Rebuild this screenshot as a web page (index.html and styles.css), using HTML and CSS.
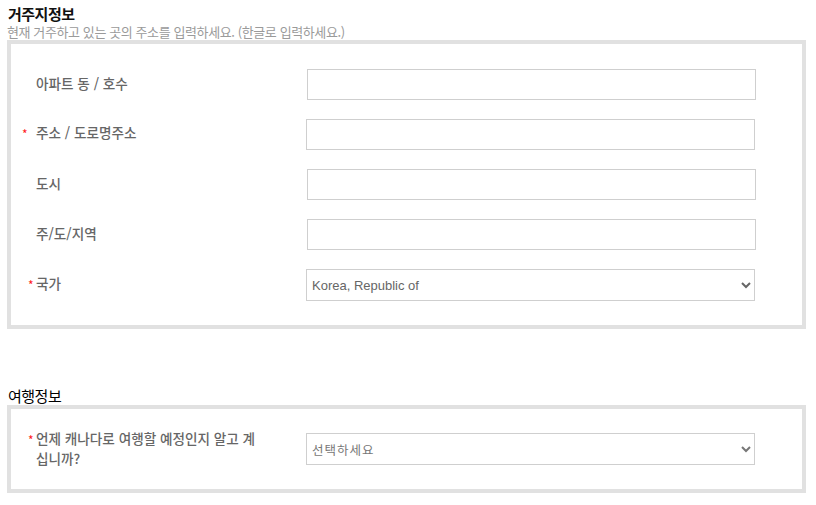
FILE: index.html
```html
<!DOCTYPE html>
<html lang="ko">
<head>
<meta charset="utf-8">
<title>거주지정보</title>
<link rel="stylesheet" href="styles.css">
</head>
<body>
<div class="page">
  <section class="section">
    <h2 class="sec-title">거주지정보</h2>
    <p class="sec-desc">현재 거주하고 있는 곳의 주소를 입력하세요. (한글로 입력하세요.)</p>
    <div class="panel">
      <div class="row">
        <label class="label">아파트 동 / 호수</label>
        <input class="field" type="text">
      </div>
      <div class="row">
        <label class="label"><span class="req req-far">*</span>주소 / 도로명주소</label>
        <input class="field shift" type="text">
      </div>
      <div class="row">
        <label class="label">도시</label>
        <input class="field" type="text">
      </div>
      <div class="row">
        <label class="label">주/도/지역</label>
        <input class="field" type="text">
      </div>
      <div class="row">
        <label class="label"><span class="req">*</span>국가</label>
        <select class="field select shift">
          <option>Korea, Republic of</option>
        </select>
      </div>
    </div>
  </section>

  <section class="section travel">
    <h2 class="sec-title light">여행정보</h2>
    <div class="panel">
      <div class="row tall">
        <label class="label wrap"><span class="req">*</span>언제 캐나다로 여행할 예정인지 알고 계십니까?</label>
        <select class="field select shift ko">
          <option>선택하세요</option>
        </select>
      </div>
    </div>
  </section>
</div>
</body>
</html>
```

FILE: styles.css
```css
* {
  box-sizing: border-box;
}

html, body {
  margin: 0;
  padding: 0;
  background: #ffffff;
}

body {
  font-family: "Noto Sans CJK KR", "Noto Sans", sans-serif;
  color: #000;
}

.page {
  width: 799px;
  margin-left: 7px;
  padding-top: 4px;
}

.sec-title {
  margin: 0;
  font-size: 15px;
  line-height: 19px;
  font-weight: bold;
  color: #111;
  padding-left: 1px;
  letter-spacing: -0.5px;
}

.sec-title.light {
  font-weight: normal;
  color: #000;
}

.sec-desc {
  margin: 0;
  font-size: 13px;
  line-height: 17px;
  color: #9a9a9a;
  letter-spacing: -0.4px;
}

.panel {
  border: 4px solid #e1e1e1;
  padding: 25px 0 24px 25px;
  display: flex;
  flex-direction: column;
  gap: 19px;
}

.travel {
  margin-top: 57px;
}

.travel .panel {
  padding-top: 24px;
}

.row {
  display: grid;
  grid-template-columns: 271px 449px;
  align-items: center;
}

.row.tall {
  grid-template-rows: 32px;
}

.label {
  font-size: 13.6px;
  line-height: 18px;
  font-weight: 500;
  color: #666;
  padding-bottom: 3px;
}

.label.wrap {
  width: 222px;
}

.req {
  display: inline-block;
  width: 8px;
  margin-left: -8px;
  color: #ff2020;
  font-size: 12px;
  font-weight: normal;
  vertical-align: -1px;
}

.req.req-far {
  width: 14px;
  margin-left: -14px;
}

.field {
  height: 31px;
  width: 449px;
  border: 1px solid #cfcfcf;
  background: #fff;
  margin: 0;
  border-radius: 0;
  font-family: "Liberation Sans", Arial, sans-serif;
  font-size: 13px;
  color: #666;
}

.field.shift {
  margin-left: -1px;
}

.select {
  height: 32px;
  padding-left: 1px;
}

.select.ko {
  font-family: "Noto Sans CJK KR", sans-serif;
  font-size: 12.5px;
  letter-spacing: 1px;
  color: #777;
}
```
